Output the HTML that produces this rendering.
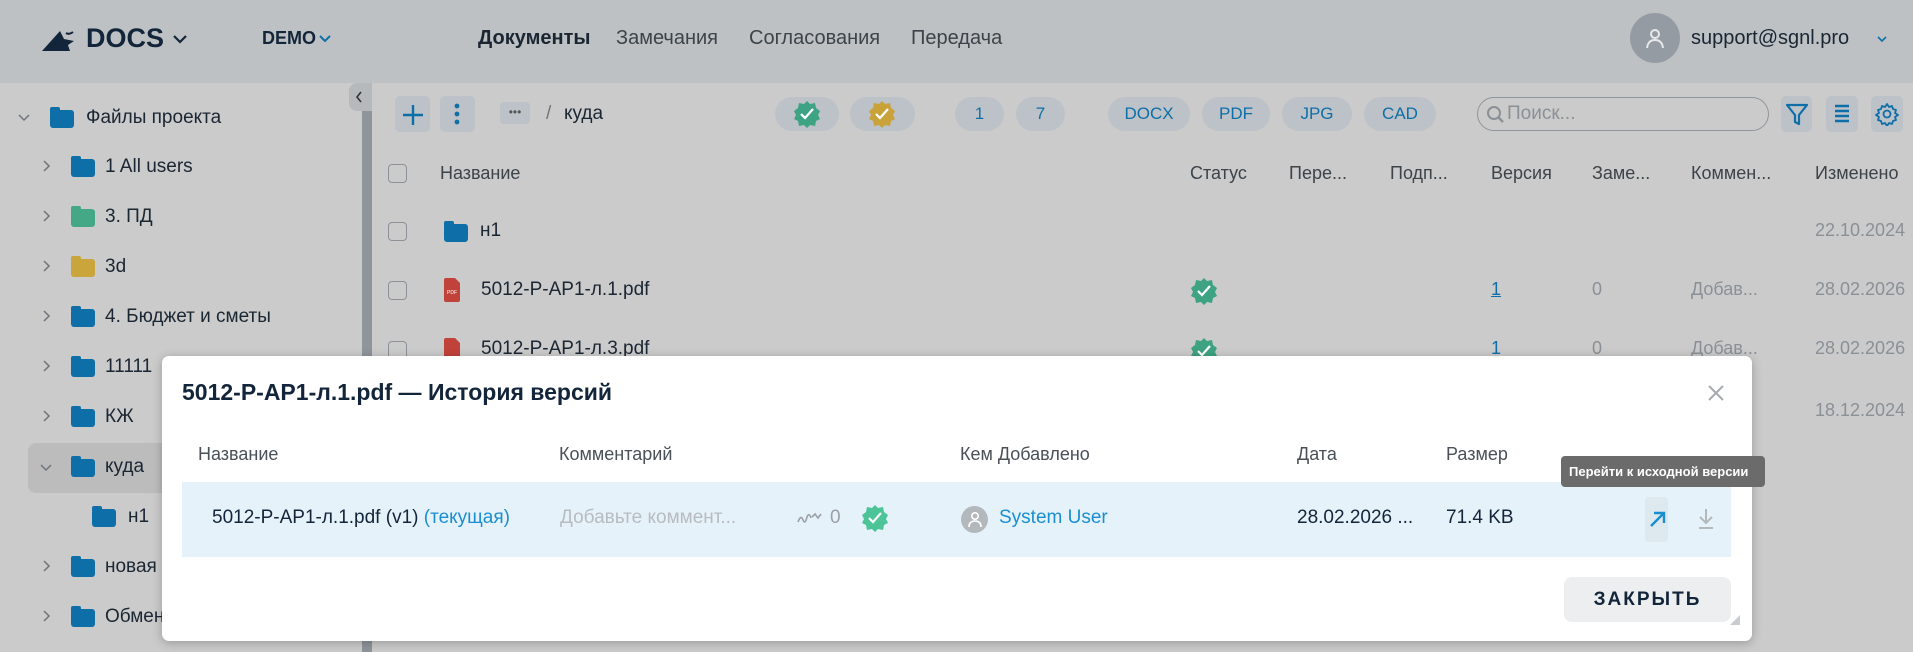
<!DOCTYPE html>
<html><head><meta charset="utf-8">
<style>
*{box-sizing:border-box;margin:0;padding:0}
body{width:1913px;height:652px;overflow:hidden;position:relative;background:#cbcbcb;font-family:"Liberation Sans Narrow","Liberation Sans",sans-serif;color:#1b2633}
.a{position:absolute;white-space:nowrap}
.hdr{left:0;top:0;width:1913px;height:83px;background:#bdc1c4}
.side{left:0;top:83px;width:362px;height:569px;background:#cbcbcb}
.bar{left:362px;top:83px;width:10px;height:569px;background:#8f959b}
.fold{position:absolute;width:24px;height:18px;border-radius:3px;background:#0e6fa8}
.fold:before{content:"";position:absolute;left:0;top:-3px;width:10px;height:5px;border-radius:2px 2px 0 0;background:inherit}
.st{font-size:19px;color:#1b2633}
.chip{position:absolute;height:34px;border-radius:17px;background:#bcc2c7;color:#0e6fa8;font-size:17px;text-align:center;line-height:34px}
.btn{position:absolute;height:36px;border-radius:5px;background:#bcc2c7}
.th{font-size:18px;color:#3c4349;top:163px}
.cb{position:absolute;width:19px;height:19px;border:1.5px solid #8c9298;border-radius:4px}
.gray{color:#8a9096}
</style></head><body>
<div class="a hdr"></div>
<svg class="a" style="left:40px;top:27px" width="38" height="26" viewBox="0 0 38 26"><path d="M2 24 L20 4 L24 12 L34 14 L28 18 L30 24 Z" fill="#13253a"/><path d="M26 6 q3 2 7 -1" stroke="#13253a" stroke-width="2" fill="none"/></svg>
<div class="a" style="left:86px;top:23px;font-size:27px;font-weight:bold;color:#13253a">DOCS</div>
<svg class="a" style="left:172px;top:34px" width="16" height="10"><path d="M2 2 L8 8 L14 2" stroke="#13253a" stroke-width="2.2" fill="none"/></svg>
<div class="a" style="left:262px;top:28px;font-size:18px;font-weight:bold;color:#13253a">DEMO</div>
<svg class="a" style="left:318px;top:34px" width="14" height="9"><path d="M2 2 L7 7 L12 2" stroke="#0e6fa8" stroke-width="2" fill="none"/></svg>
<div class="a" style="left:478px;top:27px;font-size:20px;font-weight:bold;color:#1b2633">Документы</div>
<div class="a" style="left:616px;top:27px;font-size:20px;color:#3c4349">Замечания</div>
<div class="a" style="left:749px;top:27px;font-size:20px;color:#3c4349">Согласования</div>
<div class="a" style="left:911px;top:27px;font-size:20px;color:#3c4349">Передача</div>
<div class="a" style="left:1630px;top:13px;width:50px;height:50px;border-radius:50%;background:#959ba2"></div>
<svg class="a" style="left:1643px;top:26px" width="24" height="24"><circle cx="12" cy="8" r="4" stroke="#e6e8ea" stroke-width="2" fill="none"/><path d="M4 22 q1 -8 8 -8 q7 0 8 8" stroke="#e6e8ea" stroke-width="2" fill="none"/></svg>
<div class="a" style="left:1691px;top:27px;font-size:20px;color:#1b2633">support@sgnl.pro</div>
<svg class="a" style="left:1876px;top:35px" width="12" height="8"><path d="M2 2 L6 6 L10 2" stroke="#0e6fa8" stroke-width="1.6" fill="none"/></svg>

<div class="a side"></div>
<div class="a" style="left:28px;top:443px;width:334px;height:50px;border-radius:8px 0 0 8px;background:#bcbcbc"></div>
<div class="a bar"></div>
<div class="a" style="left:349px;top:83px;width:23px;height:28px;border-radius:8px 0 0 8px;background:#b6b9bc"></div>
<svg class="a" style="left:354px;top:90px" width="10" height="14"><path d="M7 2 L3 7 L7 12" stroke="#333" stroke-width="1.6" fill="none"/></svg>

<!-- tree -->
<svg class="a" style="left:18px;top:114px" width="12" height="8"><path d="M1 1 L6 6 L11 1" stroke="#6f757b" stroke-width="1.5" fill="none"/></svg>
<div class="fold" style="left:50px;top:110px"></div><div class="a st" style="left:86px;top:107px">Файлы проекта</div>
<svg class="a" style="left:43px;top:160px" width="8" height="12"><path d="M1 1 L6 6 L1 11" stroke="#6f757b" stroke-width="1.5" fill="none"/></svg><div class="fold" style="left:71px;top:159px"></div><div class="a st" style="left:105px;top:156px">1 All users</div>
<svg class="a" style="left:43px;top:210px" width="8" height="12"><path d="M1 1 L6 6 L1 11" stroke="#6f757b" stroke-width="1.5" fill="none"/></svg><div class="fold" style="left:71px;top:209px;background:#44a887"></div><div class="a st" style="left:105px;top:206px">3. ПД</div>
<svg class="a" style="left:43px;top:260px" width="8" height="12"><path d="M1 1 L6 6 L1 11" stroke="#6f757b" stroke-width="1.5" fill="none"/></svg><div class="fold" style="left:71px;top:259px;background:#c9a53b"></div><div class="a st" style="left:105px;top:256px">3d</div>
<svg class="a" style="left:43px;top:310px" width="8" height="12"><path d="M1 1 L6 6 L1 11" stroke="#6f757b" stroke-width="1.5" fill="none"/></svg><div class="fold" style="left:71px;top:309px"></div><div class="a st" style="left:105px;top:306px">4. Бюджет и сметы</div>
<svg class="a" style="left:43px;top:360px" width="8" height="12"><path d="M1 1 L6 6 L1 11" stroke="#6f757b" stroke-width="1.5" fill="none"/></svg><div class="fold" style="left:71px;top:359px"></div><div class="a st" style="left:105px;top:356px">11111</div>
<svg class="a" style="left:43px;top:410px" width="8" height="12"><path d="M1 1 L6 6 L1 11" stroke="#6f757b" stroke-width="1.5" fill="none"/></svg><div class="fold" style="left:71px;top:409px"></div><div class="a st" style="left:105px;top:406px">КЖ</div>
<svg class="a" style="left:40px;top:464px" width="12" height="8"><path d="M1 1 L6 6 L11 1" stroke="#6f757b" stroke-width="1.5" fill="none"/></svg><div class="fold" style="left:71px;top:459px"></div><div class="a st" style="left:105px;top:456px">куда</div>
<div class="fold" style="left:92px;top:509px"></div><div class="a st" style="left:128px;top:506px">н1</div>
<svg class="a" style="left:43px;top:560px" width="8" height="12"><path d="M1 1 L6 6 L1 11" stroke="#6f757b" stroke-width="1.5" fill="none"/></svg><div class="fold" style="left:71px;top:559px"></div><div class="a st" style="left:105px;top:556px">новая</div>
<svg class="a" style="left:43px;top:610px" width="8" height="12"><path d="M1 1 L6 6 L1 11" stroke="#6f757b" stroke-width="1.5" fill="none"/></svg><div class="fold" style="left:71px;top:609px"></div><div class="a st" style="left:105px;top:606px">Обмен</div>

<!-- toolbar -->
<div class="btn" style="left:395px;top:96px;width:35px"></div>
<svg class="a" style="left:402px;top:104px" width="22" height="22"><path d="M11 1 V21 M1 11 H21" stroke="#0e6fa8" stroke-width="2.4"/></svg>
<div class="btn" style="left:440px;top:96px;width:35px"></div>
<svg class="a" style="left:450px;top:100px" width="14" height="28"><circle cx="7" cy="6" r="2.4" fill="#0e6fa8"/><circle cx="7" cy="14" r="2.4" fill="#0e6fa8"/><circle cx="7" cy="22" r="2.4" fill="#0e6fa8"/></svg>
<div class="a" style="left:500px;top:102px;width:30px;height:22px;border-radius:4px;background:#bcc2c7;font-size:12px;text-align:center;line-height:20px;color:#555">•••</div>
<div class="a" style="left:546px;top:103px;font-size:19px;color:#6f757b">/</div>
<div class="a" style="left:564px;top:103px;font-size:19px;color:#1b2633">куда</div>
<div class="chip" style="left:775px;top:97px;width:64px"></div>
<div class="chip" style="left:850px;top:97px;width:65px"></div>
<svg class="a" style="left:793px;top:100px" width="28" height="28" viewBox="0 0 28 28"><path d="M14 1 L17 4 L22 3 L23 8 L27 11 L25 15 L27 19 L23 21 L22 26 L17 25 L14 28 L11 25 L6 26 L5 21 L1 19 L3 15 L1 11 L5 8 L6 3 L11 4Z" fill="#3ea382"/><path d="M8 14 L12 18 L20 9" stroke="#fff" stroke-width="2.2" fill="none"/></svg>
<svg class="a" style="left:868px;top:100px" width="28" height="28" viewBox="0 0 28 28"><path d="M14 1 L17 4 L22 3 L23 8 L27 11 L25 15 L27 19 L23 21 L22 26 L17 25 L14 28 L11 25 L6 26 L5 21 L1 19 L3 15 L1 11 L5 8 L6 3 L11 4Z" fill="#c9a33a"/><path d="M8 14 L12 18 L20 9" stroke="#fff" stroke-width="2.2" fill="none"/></svg>
<div class="chip" style="left:955px;top:97px;width:49px">1</div>
<div class="chip" style="left:1016px;top:97px;width:49px">7</div>
<div class="chip" style="left:1108px;top:97px;width:82px">DOCX</div>
<div class="chip" style="left:1202px;top:97px;width:68px">PDF</div>
<div class="chip" style="left:1282px;top:97px;width:70px">JPG</div>
<div class="chip" style="left:1364px;top:97px;width:72px">CAD</div>
<div class="a" style="left:1477px;top:97px;width:292px;height:34px;border:1.5px solid #8f959b;border-radius:17px"></div>
<svg class="a" style="left:1486px;top:105px" width="20" height="20"><circle cx="8" cy="8" r="6" stroke="#8a9096" stroke-width="2" fill="none"/><path d="M12 12 L17 17" stroke="#8a9096" stroke-width="2.4"/></svg>
<div class="a gray" style="left:1507px;top:103px;font-size:19px">Поиск...</div>
<div class="btn" style="left:1781px;top:96px;width:31px;height:36px"></div>
<svg class="a" style="left:1785px;top:102px" width="24" height="24"><path d="M2 3 H22 L14 13 V22 L10 20 V13 Z" stroke="#0e6fa8" stroke-width="2.2" fill="none" stroke-linejoin="round"/></svg>
<div class="btn" style="left:1826px;top:96px;width:32px;height:36px"></div>
<svg class="a" style="left:1834px;top:104px" width="16" height="20"><path d="M1 2H15M1 7H15M1 12H15M1 17H15" stroke="#0e6fa8" stroke-width="2.4"/></svg>
<div class="btn" style="left:1871px;top:96px;width:32px;height:36px"></div>
<svg class="a" style="left:1875px;top:102px" width="24" height="24" viewBox="0 0 24 24"><path d="M12 2 l2 3 3 -1 1 3 3 1 -1 3 3 2 -3 2 1 3 -3 1 -1 3 -3 -1 -2 3 -2 -3 -3 1 -1 -3 -3 -1 1 -3 -3 -2 3 -2 -1 -3 3 -1 1 -3 3 1z" stroke="#0e6fa8" stroke-width="1.8" fill="none" stroke-linejoin="round"/><circle cx="12" cy="12" r="3.5" stroke="#0e6fa8" stroke-width="1.8" fill="none"/></svg>

<!-- table -->
<div class="cb" style="left:388px;top:164px"></div>
<div class="a th" style="left:440px">Название</div>
<div class="a th" style="left:1190px">Статус</div>
<div class="a th" style="left:1289px">Пере...</div>
<div class="a th" style="left:1390px">Подп...</div>
<div class="a th" style="left:1491px">Версия</div>
<div class="a th" style="left:1592px">Заме...</div>
<div class="a th" style="left:1691px">Коммен...</div>
<div class="a th" style="left:1815px">Изменено</div>

<div class="cb" style="left:388px;top:222px"></div>
<div class="fold" style="left:444px;top:224px"></div>
<div class="a st" style="left:480px;top:220px">н1</div>
<div class="a gray" style="left:1815px;top:220px;font-size:18px">22.10.2024</div>

<div class="cb" style="left:388px;top:281px"></div>
<svg class="a" style="left:444px;top:278px" width="16" height="24"><path d="M0 2 Q0 0 2 0 H11 L16 5 V22 Q16 24 14 24 H2 Q0 24 0 22Z" fill="#c0423a"/><text x="3" y="16" font-size="5" fill="#fff" font-family="Liberation Sans">PDF</text></svg>
<div class="a st" style="left:481px;top:279px">5012-P-AP1-л.1.pdf</div>
<svg class="a" style="left:1190px;top:276px" width="28" height="30" viewBox="0 0 28 28"><path d="M14 1 L17 4 L22 3 L23 8 L27 11 L25 15 L27 19 L23 21 L22 26 L17 25 L14 28 L11 25 L6 26 L5 21 L1 19 L3 15 L1 11 L5 8 L6 3 L11 4Z" fill="#3ea382"/><path d="M8 14 L12 18 L20 9" stroke="#fff" stroke-width="2.2" fill="none"/></svg>
<div class="a" style="left:1491px;top:279px;font-size:18px;color:#0e6fa8;text-decoration:underline">1</div>
<div class="a gray" style="left:1592px;top:279px;font-size:18px">0</div>
<div class="a gray" style="left:1691px;top:279px;font-size:18px">Добав...</div>
<div class="a gray" style="left:1815px;top:279px;font-size:18px">28.02.2026</div>

<div class="cb" style="left:388px;top:341px"></div>
<svg class="a" style="left:444px;top:338px" width="16" height="24"><path d="M0 2 Q0 0 2 0 H11 L16 5 V22 Q16 24 14 24 H2 Q0 24 0 22Z" fill="#c0423a"/></svg>
<div class="a st" style="left:481px;top:338px">5012-P-AP1-л.3.pdf</div>
<svg class="a" style="left:1190px;top:336px" width="28" height="30" viewBox="0 0 28 28"><path d="M14 1 L17 4 L22 3 L23 8 L27 11 L25 15 L27 19 L23 21 L22 26 L17 25 L14 28 L11 25 L6 26 L5 21 L1 19 L3 15 L1 11 L5 8 L6 3 L11 4Z" fill="#3ea382"/><path d="M8 14 L12 18 L20 9" stroke="#fff" stroke-width="2.2" fill="none"/></svg>
<div class="a" style="left:1491px;top:338px;font-size:18px;color:#0e6fa8">1</div>
<div class="a gray" style="left:1592px;top:338px;font-size:18px">0</div>
<div class="a gray" style="left:1691px;top:338px;font-size:18px">Добав...</div>
<div class="a gray" style="left:1815px;top:338px;font-size:18px">28.02.2026</div>
<div class="a gray" style="left:1815px;top:400px;font-size:18px">18.12.2024</div>

<!-- modal -->
<div class="a" style="left:162px;top:356px;width:1590px;height:285px;background:#fff;border-radius:7px;box-shadow:0 2px 10px rgba(0,0,0,.25)"></div>
<div class="a" style="left:182px;top:379px;font-size:23px;font-weight:bold;color:#13253a">5012-P-AP1-л.1.pdf — История версий</div>
<svg class="a" style="left:1707px;top:384px" width="18" height="18"><path d="M2 2L16 16M16 2L2 16" stroke="#a6abb0" stroke-width="2"/></svg>
<div class="a" style="left:198px;top:444px;font-size:18px;color:#4a5057">Название</div>
<div class="a" style="left:559px;top:444px;font-size:18px;color:#4a5057">Комментарий</div>
<div class="a" style="left:960px;top:444px;font-size:18px;color:#4a5057">Кем Добавлено</div>
<div class="a" style="left:1297px;top:444px;font-size:18px;color:#4a5057">Дата</div>
<div class="a" style="left:1446px;top:444px;font-size:18px;color:#4a5057">Размер</div>
<div class="a" style="left:182px;top:482px;width:1549px;height:75px;background:#e6f2f9"></div>
<div class="a" style="left:212px;top:507px;font-size:19px;color:#13253a">5012-P-AP1-л.1.pdf (v1) <span style="color:#1a8fd0">(текущая)</span></div>
<div class="a" style="left:560px;top:507px;font-size:19px;color:#b7bcc1">Добавьте коммент...</div>
<svg class="a" style="left:797px;top:511px" width="26" height="14"><path d="M1 11 q3 -8 5 -2 q2 5 4 -3 q2 -5 4 1 M15 6 l3 -3 l3 4 l3 -4" stroke="#9aa0a6" stroke-width="1.6" fill="none"/></svg>
<div class="a" style="left:830px;top:507px;font-size:19px;color:#9aa0a6">0</div>
<svg class="a" style="left:861px;top:504px" width="28" height="28" viewBox="0 0 28 28"><path d="M14 1 L17 4 L22 3 L23 8 L27 11 L25 15 L27 19 L23 21 L22 26 L17 25 L14 28 L11 25 L6 26 L5 21 L1 19 L3 15 L1 11 L5 8 L6 3 L11 4Z" fill="#4cc498"/><path d="M8 14 L12 18 L20 9" stroke="#fff" stroke-width="2.2" fill="none"/></svg>
<div class="a" style="left:961px;top:506px;width:27px;height:27px;border-radius:50%;background:#b3b8bd"></div>
<svg class="a" style="left:966px;top:510px" width="18" height="20"><circle cx="9" cy="6" r="3.2" stroke="#fff" stroke-width="1.6" fill="none"/><path d="M3 17 q0 -6 6 -6 q6 0 6 6" stroke="#fff" stroke-width="1.6" fill="none"/></svg>
<div class="a" style="left:999px;top:507px;font-size:19px;color:#1a8fd0">System User</div>
<div class="a" style="left:1297px;top:507px;font-size:19px;color:#13253a">28.02.2026 ...</div>
<div class="a" style="left:1446px;top:507px;font-size:19px;color:#13253a">71.4 KB</div>
<div class="a" style="left:1645px;top:497px;width:23px;height:45px;border-radius:4px;background:#dde8ef"></div>
<svg class="a" style="left:1648px;top:509px" width="20" height="20"><path d="M3 17 L16 4 M6 4 H16 V14" stroke="#1a8fd0" stroke-width="2.4" fill="none"/></svg>
<svg class="a" style="left:1697px;top:507px" width="18" height="24"><path d="M9 2 V16 M3 10 L9 16 L15 10 M2 21 H16" stroke="#b3b8bd" stroke-width="2" fill="none"/></svg>
<div class="a" style="left:1561px;top:456px;width:204px;height:31px;border-radius:4px;background:#6b6b6b;color:#fff;font-size:13px;font-weight:bold;line-height:31px;padding-left:8px">Перейти к исходной версии</div>
<div class="a" style="left:1564px;top:577px;width:167px;height:45px;border-radius:8px;background:#eceef0;text-align:center;line-height:45px;font-size:19px;font-weight:bold;letter-spacing:2px;color:#13253a">ЗАКРЫТЬ</div>
<svg class="a" style="left:1730px;top:615px" width="10" height="10"><path d="M10 0 V10 H0Z" fill="#c8ccd0"/></svg>
</body></html>
